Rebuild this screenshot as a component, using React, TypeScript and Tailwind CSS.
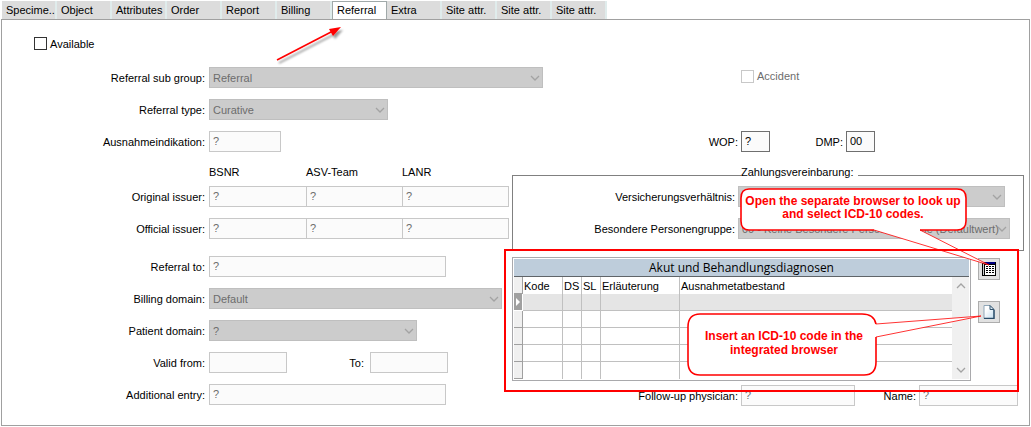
import type { ReactNode } from "react";

const tabs = [
  "Specime..",
  "Object",
  "Attributes",
  "Order",
  "Report",
  "Billing",
  "Referral",
  "Extra",
  "Site attr.",
  "Site attr.",
  "Site attr.",
];

function Chevron({ up = false }: { up?: boolean }) {
  return (
    <svg width="10" height="6" viewBox="0 0 10 6" fill="none" stroke="#a3a3a3" strokeWidth="1.3">
      <path d={up ? "M1 5 L5 1 L9 5" : "M1 1 L5 5 L9 1"} />
    </svg>
  );
}

function Select({ id, value, width }: { id: string; value: string; width: string }) {
  return (
    <div className={`relative h-[21px] ${width}`}>
      <select
        id={id}
        disabled
        className="block h-full w-full appearance-none border border-[#bfbfbf] bg-[#cccccc] pr-1 pl-[3px] text-[11px] leading-[18px] text-[#6d6d6d] opacity-100"
      >
        <option>{value}</option>
      </select>
      <span className="pointer-events-none absolute top-[8px] right-[3px]">
        <Chevron />
      </span>
    </div>
  );
}

function Field({
  id,
  value = "",
  width,
  active = false,
  label,
}: {
  id: string;
  value?: string;
  width: string;
  active?: boolean;
  label?: string;
}) {
  return (
    <input
      id={id}
      type="text"
      aria-label={label}
      defaultValue={value}
      disabled={!active}
      className={`block h-[21px] border bg-[#fbfbfb] px-[3px] pb-[2px] text-[11px] ${
        active ? "border-[#6f6f6f] text-black" : "border-[#c8c8c8] text-[#6d6d6d]"
      } ${width}`}
    />
  );
}

function Row({ id, label, children }: { id: string; label: string; children: ReactNode }) {
  return (
    <div className="grid h-[21px] grid-cols-[203px_1fr] items-center gap-1">
      <label htmlFor={id} className="text-right whitespace-nowrap">
        {label}
      </label>
      <div className="flex items-center">{children}</div>
    </div>
  );
}

function IssuerRow({ id, label }: { id: string; label: string }) {
  return (
    <Row id={id} label={label}>
      <div className="grid grid-cols-[97px_96px_107px]">
        <Field id={id} value="?" width="w-[98px]" />
        <Field id={`${id}-asv`} label={`${label} ASV-Team`} value="?" width="w-[97px]" />
        <Field id={`${id}-lanr`} label={`${label} LANR`} value="?" width="w-full" />
      </div>
    </Row>
  );
}

function DiagnosisTable() {
  return (
    <div className="min-w-0 flex-1 border border-[#a9a9ac] bg-white p-px">
      <div
        id="diagnoses"
        className="h-[18px] border-b border-[#5f6468] bg-[#becddb] text-center font-['Open_Sans','Noto_Sans',sans-serif] text-[12px] leading-[17px]"
      >
        Akut und Behandlungsdiagnosen
      </div>
      <div className="flex">
        <table aria-labelledby="diagnoses" className="w-full min-w-0 flex-1 table-fixed border-separate border-spacing-0">
          <colgroup>
            <col className="w-[9px]" />
            <col className="w-[40px]" />
            <col className="w-[19px]" />
            <col className="w-[19px]" />
            <col className="w-[79px]" />
            <col />
          </colgroup>
          <thead>
            <tr className="h-[17px] text-left leading-[16px]">
              <td className="border-r border-b border-[#a0a0a0] bg-[#f0f0f0] p-0" />
              {["Kode", "DS", "SL", "Erläuterung", "Ausnahmetatbestand"].map((h, i) => (
                <th
                  key={h}
                  className={`p-0 pl-[1px] font-normal whitespace-nowrap ${i < 4 ? "border-r border-[#c0c0c0]" : ""}`}
                >
                  {h}
                </th>
              ))}
            </tr>
          </thead>
          <tbody>
            {[0, 1, 2, 3, 4].map((r) => (
              <tr key={r} className={`h-[17px] ${r === 0 ? "bg-[#e5e5e5]" : ""}`}>
                <td
                  className={`border-r border-b p-0 ${
                    r === 0 ? "border-white bg-[#a0a0a0]" : "border-[#a0a0a0] bg-[#f0f0f0]"
                  }`}
                >
                  {r === 0 && (
                    <svg width="6" height="8" viewBox="0 0 6 8" className="ml-[1px] block">
                      <path d="M1 0 L5 4 L1 8 Z" fill="#fff" />
                    </svg>
                  )}
                </td>
                {[0, 1, 2, 3, 4].map((c) => (
                  <td
                    key={c}
                    className={`border-[#c0c0c0] p-0 ${c < 4 ? "border-r" : ""} ${r < 4 ? "border-b" : ""}`}
                  />
                ))}
              </tr>
            ))}
          </tbody>
        </table>
        <div className="flex w-[17px] flex-col items-center justify-between bg-[#f0f0f0] py-[6px]">
          <Chevron up />
          <Chevron />
        </div>
      </div>
    </div>
  );
}

function BrowserIcon() {
  return (
    <svg width="14" height="14" viewBox="0 0 14 14" shapeRendering="crispEdges">
      <rect width="14" height="14" fill="#000" />
      <rect x="3" y="0" width="10" height="2" fill="#000080" />
      <rect x="1" y="2" width="1" height="11" fill="#ccc" />
      <rect x="3" y="3" width="10" height="10" fill="#fff" />
      <path
        d="M4 4.5h2M7 4.5h2M10 4.5h2M4 6.5h2M7 6.5h2M10 6.5h2M4 8.5h2M7 8.5h2M10 8.5h2M4 10.5h2M7 10.5h2M10 10.5h2"
        stroke="#000"
      />
    </svg>
  );
}

function PageIcon() {
  return (
    <svg width="12" height="14" viewBox="0 0 12 14">
      <defs>
        <linearGradient id="page" x1="0" y1="0" x2="1" y2="1">
          <stop offset="0.3" stopColor="#ffffff" />
          <stop offset="1" stopColor="#c2dcee" />
        </linearGradient>
      </defs>
      <path d="M1 0.5 H7 L11 4.5 V13.5 H1 Z" fill="url(#page)" stroke="#8fa6b8" />
      <path d="M11 5 V13.5 H1" fill="none" stroke="#294b68" strokeWidth="1.4" />
      <path d="M7 0.5 V4.5 H11 Z" fill="#dcebf5" stroke="#35546e" />
    </svg>
  );
}

export default function App() {
  return (
    <div className="bg-white pt-px pr-[1px] pl-[1px] font-['Liberation_Sans',Arial,sans-serif] text-[11px] leading-[14px] text-black">
      <div role="tablist" className="flex h-[18px] pl-px">
        {tabs.map((t, i) => (
          <button
            key={i}
            role="tab"
            type="button"
            aria-selected={t === "Referral"}
            className={`w-[55px] pl-1 text-left whitespace-nowrap ${
              t === "Referral"
                ? "border-t border-r border-l border-[#a0a9a9] bg-white pb-px"
                : "border-r-2 border-[#e0ecec] bg-[#dcdcdc]"
            }`}
          >
            {t}
          </button>
        ))}
      </div>

      <main className="relative border border-[#a0a0a0] pb-[19px]">
        <svg
          className="pointer-events-none absolute top-[4px] left-[270px]"
          width="76"
          height="46"
          viewBox="0 0 76 46"
          aria-hidden="true"
        >
          <defs>
            <filter id="soft" x="-20%" y="-20%" width="140%" height="150%">
              <feDropShadow dx="2" dy="3" stdDeviation="1.3" floodColor="#000" floodOpacity="0.4" />
            </filter>
          </defs>
          <g filter="url(#soft)">
            <path d="M5 36 L60 7.500" stroke="#f00" strokeWidth="1.6" />
            <path d="M69 3 L57 5 L61 12 Z" fill="#f00" />
          </g>
        </svg>

        <div className="grid grid-cols-[510px_1fr]">
          <form className="flex flex-col gap-[11px] pt-[17px]">
            <label className="mb-[6px] ml-8 flex h-[13px] items-center gap-[3px]">
              <input type="checkbox" className="size-[13px] appearance-none border border-[#333] bg-white" />
              Available
            </label>
            <Row id="subgroup" label="Referral sub group:">
              <Select id="subgroup" value="Referral" width="w-[334px] shrink-0" />
            </Row>
            <Row id="type" label="Referral type:">
              <Select id="type" value="Curative" width="w-[179px]" />
            </Row>
            <Row id="indication" label="Ausnahmeindikation:">
              <Field id="indication" value="?" width="w-[72px]" />
            </Row>
            <div className="-mb-[5px] ml-[207px] grid h-[17px] grid-cols-[97px_96px_107px] items-center">
              <span>BSNR</span>
              <span>ASV-Team</span>
              <span>LANR</span>
            </div>
            <IssuerRow id="original" label="Original issuer:" />
            <div className="mb-[6px]">
              <IssuerRow id="official" label="Official issuer:" />
            </div>
            <Row id="referralto" label="Referral to:">
              <Field id="referralto" value="?" width="w-[237px]" />
            </Row>
            <Row id="billing" label="Billing domain:">
              <Select id="billing" value="Default" width="w-[293px]" />
            </Row>
            <Row id="patient" label="Patient domain:">
              <Select id="patient" value="?" width="w-[208px]" />
            </Row>
            <Row id="from" label="Valid from:">
              <Field id="from" width="w-[78px]" />
              <label htmlFor="to" className="w-[77px] text-right">
                To:
              </label>
              <div className="pl-[6px]">
                <Field id="to" width="w-[78px]" />
              </div>
            </Row>
            <Row id="entry" label="Additional entry:">
              <Field id="entry" value="?" width="w-[237px]" />
            </Row>
          </form>

          <div className="relative flex flex-col pt-[47px]">
            <label className="ml-[229px] flex h-[18px] items-center gap-[3px] text-[#6d6d6d]">
              <input
                type="checkbox"
                disabled
                className="size-[13px] appearance-none border border-[#c8c8c8] bg-white"
              />
              Accident
            </label>
            <div className="mt-[46px] flex items-center">
              <label htmlFor="wop" className="w-[226px] text-right">
                WOP:
              </label>
              <div className="pl-[3px]">
                <Field id="wop" value="?" width="w-[29px]" active />
              </div>
              <label htmlFor="dmp" className="w-[73px] text-right">
                DMP:
              </label>
              <div className="pl-[3px]">
                <Field id="dmp" value="00" width="w-[29px]" active />
              </div>
            </div>

            <fieldset className="mt-[13px] mr-[5px] h-[86px] min-w-0 border border-[#808080]">
              <legend className="ml-[228px] pr-1 pb-[6px]">Zahlungsvereinbarung:</legend>
              <div className="flex flex-col gap-[11px] pt-px">
                <div className="grid grid-cols-[222px_1fr] items-center gap-[3px]">
                  <label htmlFor="insurance" className="text-right">
                    Versicherungsverhältnis:
                  </label>
                  <Select id="insurance" value="" width="w-[267px]" />
                </div>
                <div className="grid grid-cols-[222px_1fr] items-center gap-[3px]">
                  <label htmlFor="group" className="text-right">
                    Besondere Personengruppe:
                  </label>
                  <Select
                    id="group"
                    value="00 - Keine Besondere Personengruppe (Defaultwert)"
                    width="w-[272px]"
                  />
                </div>
              </div>
            </fieldset>

            <div className="relative mt-[6px] flex gap-[7px] pr-[29px]">
              <DiagnosisTable />
              <div className="flex flex-col gap-[21px] pt-px">
                <button
                  type="button"
                  aria-label="Open ICD-10 browser"
                  className="flex size-[22px] items-center justify-center border border-[#adadad] bg-[#e1e1e1]"
                >
                  <BrowserIcon />
                </button>
                <button
                  type="button"
                  aria-label="Insert ICD-10 code"
                  className="flex size-[22px] items-center justify-center border border-[#adadad] bg-[#e1e1e1]"
                >
                  <PageIcon />
                </button>
              </div>
            </div>

            <div className="mt-[4px] flex items-center">
              <label htmlFor="physician" className="w-[226px] text-right">
                Follow-up physician:
              </label>
              <div className="pl-[3px]">
                <Field id="physician" value="?" width="w-[114px]" />
              </div>
              <label htmlFor="name" className="w-[61px] text-right">
                Name:
              </label>
              <div className="pl-[3px]">
                <Field id="name" value="?" width="w-[99px]" />
              </div>
            </div>

            <div className="pointer-events-none absolute top-[167px] right-[28px] h-[94px] w-[262px] text-[12px] font-bold text-[#f00]">
              <svg className="absolute inset-0" width="262" height="94" viewBox="0 0 262 94" aria-hidden="true">
                <path
                  d="M10 2 H218 Q227 2 227 11 V34 Q227 43 218 43 H181 L250 78 L135 43 H10 Q2 43 2 34 V11 Q2 2 10 2 Z"
                  fill="#fff"
                />
                <path
                  d="M181 43 H218 Q227 43 227 34 V11 Q227 2 218 2 H10 Q2 2 2 11 V34 Q2 43 10 43 H135"
                  fill="none"
                  stroke="#f00"
                  strokeWidth="1.6"
                />
                <path d="M181 43 L250 78 L135 43" fill="none" stroke="#f00" strokeWidth="0.8" />
              </svg>
              <p className="relative w-[228px] pt-[8px] text-center leading-[13px] whitespace-nowrap">
                Open the separate browser to look up
                <br />
                and select ICD-10 codes.
              </p>
            </div>

            <div className="pointer-events-none absolute top-[292px] right-[42px] h-[66px] w-[301px] text-[12px] font-bold text-[#f00]">
              <svg className="absolute inset-0" width="301" height="66" viewBox="0 0 301 66" aria-hidden="true">
                <path
                  d="M14 2 H178 Q190 2 190 12 L295 4 L190 25 V50 Q190 63 178 63 H14 Q2 63 2 50 V15 Q2 2 14 2 Z"
                  fill="#fff"
                />
                <path
                  d="M190 12 Q188 2 176 2 H14 Q2 2 2 15 V50 Q2 63 14 63 H178 Q190 63 190 50 V25"
                  fill="none"
                  stroke="#f00"
                  strokeWidth="1.6"
                />
                <path d="M190 12 L295 4 L190 25" fill="none" stroke="#f00" strokeWidth="0.8" />
              </svg>
              <p className="relative w-[196px] pt-[17px] text-center leading-[14px] whitespace-nowrap">
                Insert an ICD-10 code in the
                <br />
                integrated browser
              </p>
            </div>

            <div className="pointer-events-none absolute top-[229px] right-[10px] -left-2 h-[143px] border-2 border-[#f00]" />
          </div>
        </div>
      </main>
    </div>
  );
}
